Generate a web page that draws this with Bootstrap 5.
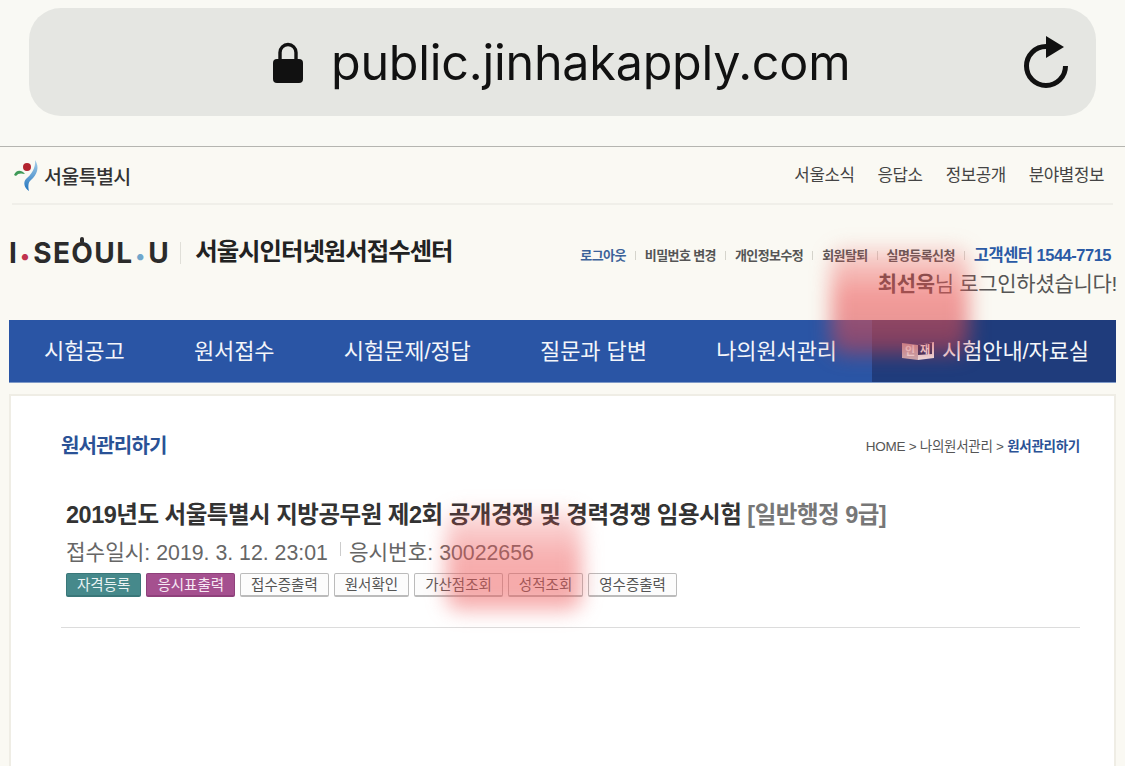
<!DOCTYPE html>
<html lang="ko">
<head>
  <meta charset="UTF-8" />
  <meta name="viewport" content="width=device-width, initial-scale=1.0" />
  <title>원서관리하기</title>
  <link href="https://cdn.jsdelivr.net/npm/bootstrap@5.3.0/dist/css/bootstrap.min.css" rel="stylesheet">
  <style>
    html, body { height: 766px; overflow: hidden; }
    body {
      position: relative;
      background: #faf9f3;
      color: #333;
      font-family: "Liberation Sans", "Noto Sans CJK KR", sans-serif;
    }
    .addr-zone { height: 146px; padding: 8px 29px 0; background: #f9f9f4; }
    .addr-bar { height: 108px; border-radius: 32px; background: #e5e6e2; padding: 0 26px 0 243px; }
    .addr-text { font-family: Inter, "Liberation Sans", sans-serif; font-size: 48.4px; color: #111; margin-left: 27px; letter-spacing: -.2px; line-height: 1; padding-top: 3px; }
    .top-wrap { border-top: 1px solid #b5b5b0; }
    .gov-bar { height: 58px; margin: 0 12px; padding-top: 2px; border-bottom: 2px solid #f0efe9; }
    .gov-name { font-size: 19.5px; font-weight: 500; color: #333; letter-spacing: -.6px; margin-left: 2px; padding-top: 3px; }
    .gov-links { gap: 23px; font-size: 16.8px; color: #444; letter-spacing: -.4px; margin-right: 9px; }
    .site-head { height: 115px; padding: 0 9px; }
    .head-left { padding-bottom: 20px; }
    .head-right { padding-top: 42px; }
    .seoul-brand { font-family: Inter, "Liberation Sans", sans-serif; font-weight: 700; font-size: 28px; color: #2b2b2b; letter-spacing: 1.4px; line-height: 1; }
    .dot-red { color: #c0334d; margin: 0 2px; font-size: 20px; }
    .dot-blue { color: #6fa6cc; margin: 0 2px; font-size: 20px; }
    .o-hat { position: relative; }
    .o-hat::before { content: ""; position: absolute; left: 50%; top: 1px; width: 4px; height: 5px; margin-left: -2.5px; background: #2b2b2b; border-radius: 2px 2px 0 0; }
    .brand-sep { width: 1px; height: 22px; background: #e0dfd8; margin: 0 14px 0 10px; }
    .center-name { font-size: 24.4px; font-weight: 700; color: #222; letter-spacing: -1px; }
    .util-links { font-size: 13px; font-weight: 700; color: #555; letter-spacing: -.6px; line-height: 1; }
    .util-links span.util-sep { width: 1px; height: 9px; background: #d5d4cc; margin: 0 9px; }
    .util-blue { color: #3c6299; }
    .call-center { font-size: 16.5px; font-weight: 700; color: #2a5aa5; letter-spacing: -.5px; margin-right: 5px; }
    .greeting { font-size: 21px; color: #555; letter-spacing: -.3px; margin-top: 8px; margin-right: -1px; line-height: 24px; }
    .greeting b { color: #444; }
    .site-nav { height: 63px; margin: 0 9px; background: #2a55a5; border-bottom: 1px solid #7f9ac8; }
    .site-nav a { color: #f4f6fa; text-decoration: none; font-size: 22px; letter-spacing: -.1px; white-space: nowrap; }
    .nav-item-box { padding-left: 35px; padding-right: 35px; }
    .nav-last { width: 244px; background: #1f3c7c; padding-left: 3px; }
    .jae-flag { margin-right: 8px; flex: none; }
    .jae-flag text { font-size: 11px; font-weight: 700; }
    .content-box { margin: 11px 9px 0; height: 380px; background: #fff; border: 2px solid #efede5; border-bottom: 0; padding: 0 34px 0 50px; }
    .page-head { height: 85px; padding-top: 38px; }
    .page-title { font-size: 20px; font-weight: 700; color: #2a5296; letter-spacing: -.8px; margin: 0; }
    .crumbs { font-size: 13.5px; color: #555; letter-spacing: -.28px; padding-top: 3px; }
    .crumbs b { color: #2a5296; }
    .exam-box { padding: 19px 0 30px 5px; border-bottom: 1px solid #dcdcdc; }
    .exam-title { font-size: 23.5px; font-weight: 700; color: #333; margin: 0 0 9px; letter-spacing: -.5px; line-height: 30px; }
    .exam-title span { color: #777; }
    .exam-meta { font-size: 21.3px; color: #666; line-height: 28px; }
    .meta-sep { width: 1px; height: 14px; background: #ccc; margin: 0 8px 8px 12px; }
    .act-row { gap: 5px; margin-top: 6px; }
    .act-btn { height: 24px; padding: 0 10px; font-size: 14.5px; line-height: 22px; color: #555; background: #fcfcfc; border: 1px solid #bbb; border-bottom-width: 2px; border-radius: 2px; white-space: nowrap; --bs-btn-padding-y: 0; }
    .act-teal { background: #46898b; border-color: #3a7779; color: #e9f3f3; }
    .act-plum { background: #a5508f; border-color: #8f417b; color: #f7e9f3; }
    .smudge { position: absolute; filter: blur(10px); border-radius: 14px; pointer-events: none; }
    .smudge-a { left: 831px; top: 248px; width: 138px; height: 106px; background: linear-gradient(180deg, rgba(238, 90, 90, .2), rgba(238, 90, 90, .6) 45%, rgba(200, 60, 70, .55)); }
    .smudge-c { left: 446px; top: 510px; width: 136px; height: 100px; background: linear-gradient(180deg, rgba(238, 90, 90, .18), rgba(238, 90, 90, .5) 50%, rgba(238, 90, 90, .5)); }
  </style>
</head>
<body>
  <div class="addr-zone">
    <div class="addr-bar d-flex align-items-center">
      <svg width="32" height="41" viewBox="0 0 32 41" aria-hidden="true">
        <path d="M8 18V10.5a8 8 0 0 1 16 0V18" fill="none" stroke="#111" stroke-width="3.4"/>
        <rect x="1" y="17" width="30" height="24" rx="4" fill="#111"/>
      </svg>
      <span class="addr-text">public.jinhakapply.com</span>
      <svg class="ms-auto" width="48" height="54" viewBox="0 0 48 54" aria-hidden="true">
        <path d="M43.5 31a19.5 19.5 0 1 1-19.5-19.5h2" fill="none" stroke="#111" stroke-width="5"/>
        <path d="M24 1l18 11-18 11z" fill="#111"/>
      </svg>
    </div>
  </div>

  <div class="top-wrap">
    <div class="gov-bar d-flex align-items-center justify-content-between">
      <div class="d-flex align-items-center">
        <svg width="30" height="32" viewBox="0 0 30 32" aria-hidden="true">
          <defs>
            <linearGradient id="swoosh" x1="0" y1="0" x2="0" y2="1">
              <stop offset="0" stop-color="#a8d0ea"/>
              <stop offset="1" stop-color="#2173bd"/>
            </linearGradient>
          </defs>
          <circle cx="15" cy="7" r="4" fill="#b3232e"/>
          <path d="M2 15c2-5 7-6 11-1-4-1-7-1-9 2z" fill="#3f9a57"/>
          <path d="M23 0c5 7 2 15-4 20-3 2-3 7-2 11-5-3-6-9-3-12 5-4 10-11 9-19z" fill="url(#swoosh)"/>
        </svg>
        <span class="gov-name">서울특별시</span>
      </div>
      <div class="gov-links d-flex">
        <span>서울소식</span><span>응답소</span><span>정보공개</span><span>분야별정보</span>
      </div>
    </div>

    <div class="site-head d-flex justify-content-between">
      <div class="head-left d-flex align-items-center">
        <span class="seoul-brand">I<span class="dot-red">•</span>SE<span class="o-hat">O</span>UL<span class="dot-blue">•</span>U</span>
        <span class="brand-sep"></span>
        <span class="center-name">서울시인터넷원서접수센터</span>
      </div>
      <div class="head-right d-flex flex-column align-items-end">
        <div class="util-links d-flex align-items-center">
          <span class="util-blue">로그아웃</span><span class="util-sep"></span>
          <span>비밀번호 변경</span><span class="util-sep"></span>
          <span>개인정보수정</span><span class="util-sep"></span>
          <span>회원탈퇴</span><span class="util-sep"></span>
          <span>실명등록신청</span><span class="util-sep"></span>
          <span class="call-center">고객센터 1544-7715</span>
        </div>
        <div class="greeting"><b>최선욱</b>님 로그인하셨습니다!</div>
      </div>
    </div>

    <nav class="site-nav d-flex align-items-stretch">
      <div class="d-flex flex-grow-1 justify-content-between align-items-center nav-item-box">
        <a href="#">시험공고</a>
        <a href="#">원서접수</a>
        <a href="#">시험문제/정답</a>
        <a href="#">질문과 답변</a>
        <a href="#">나의원서관리</a>
      </div>
      <div class="nav-last d-flex align-items-center justify-content-center">
        <svg class="jae-flag" width="32" height="19" viewBox="0 0 32 19" aria-hidden="true">
          <path d="M0 1l16 2v15L0 16z" fill="#c9b6bb"/>
          <path d="M16 3l16-3v16l-16 2z" fill="#f2f2f2"/>
          <path d="M16 3l14-2.6v11.6l-14 1z" fill="#1d2f63"/>
          <text x="3" y="13" fill="#f5f0f0">인</text>
          <text x="18" y="11.5" fill="#fff">재</text>
        </svg>
        <a href="#">시험안내/자료실</a>
      </div>
    </nav>

    <main class="content-box">
      <div class="page-head d-flex justify-content-between align-items-start">
        <h2 class="page-title">원서관리하기</h2>
        <div class="crumbs">HOME &gt; 나의원서관리 &gt; <b>원서관리하기</b></div>
      </div>
      <div class="exam-box">
        <h3 class="exam-title">2019년도 서울특별시 지방공무원 제2회 공개경쟁 및 경력경쟁 임용시험 <span>[일반행정 9급]</span></h3>
        <div class="exam-meta d-flex align-items-center">
          <span>접수일시: 2019. 3. 12. 23:01</span><span class="meta-sep"></span><span>응시번호: 30022656</span>
        </div>
        <div class="act-row d-flex">
          <button class="btn act-btn act-teal">자격등록</button>
          <button class="btn act-btn act-plum">응시표출력</button>
          <button class="btn act-btn">접수증출력</button>
          <button class="btn act-btn">원서확인</button>
          <button class="btn act-btn">가산점조회</button>
          <button class="btn act-btn">성적조회</button>
          <button class="btn act-btn">영수증출력</button>
        </div>
      </div>
    </main>
  </div>

  <div class="smudge smudge-a"></div>
  <div class="smudge smudge-c"></div>

  <script src="https://cdn.jsdelivr.net/npm/bootstrap@5.3.0/dist/js/bootstrap.bundle.min.js"></script>
</body>
</html>
